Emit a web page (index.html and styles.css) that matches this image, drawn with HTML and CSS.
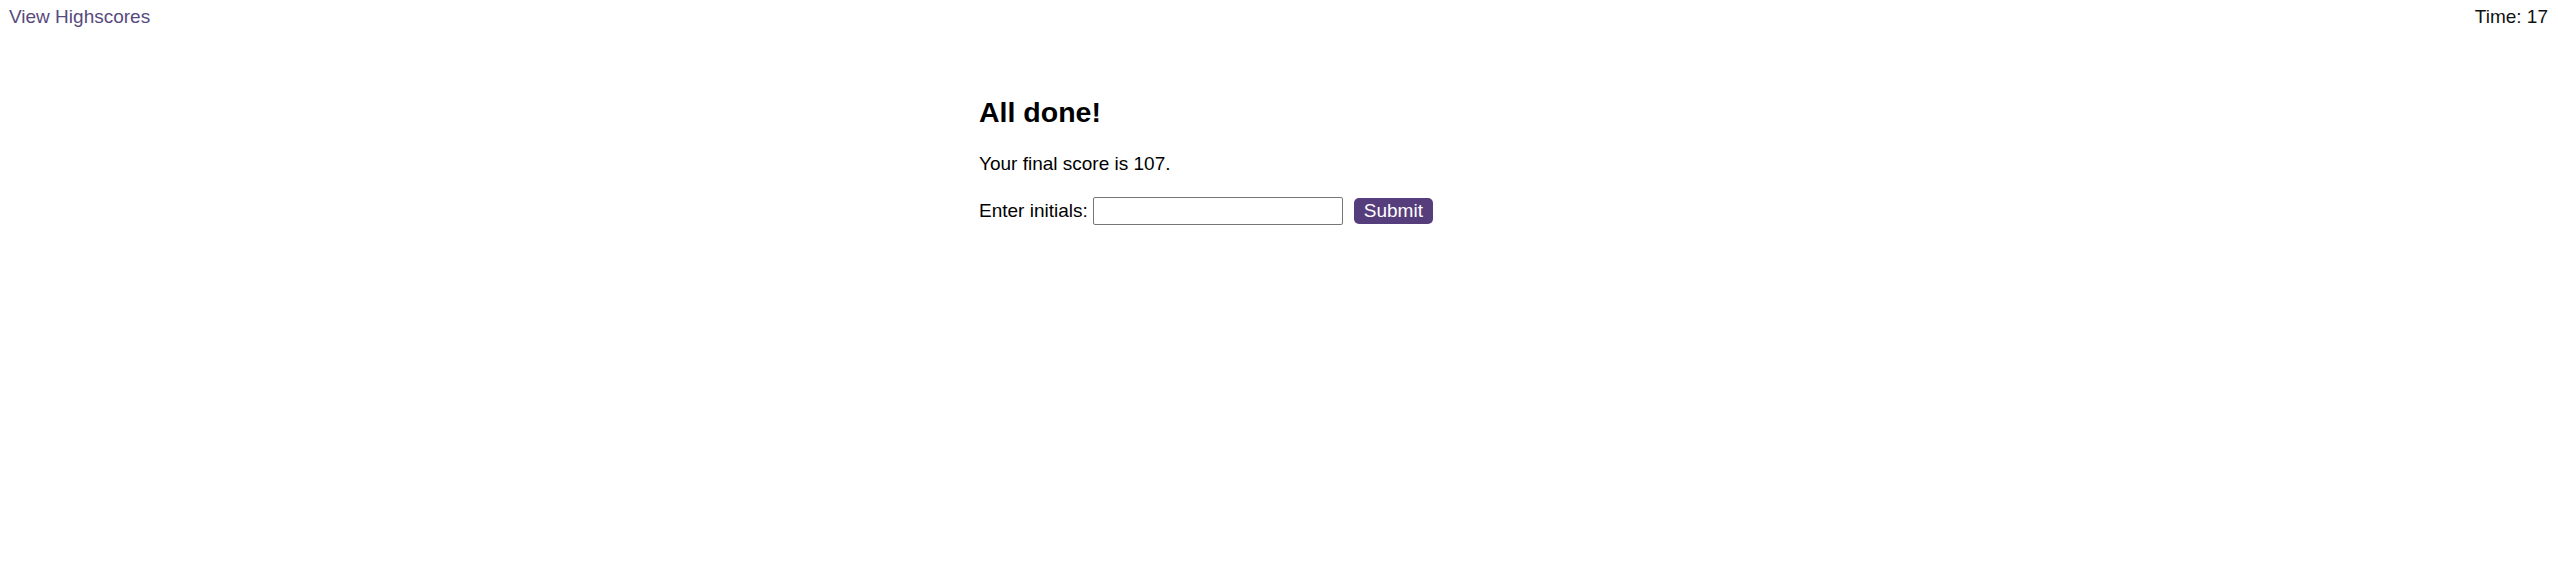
FILE: index.html
```html
<!DOCTYPE html>
<html lang="en">
<head>
<meta charset="utf-8">
<title>Code Quiz</title>
<link rel="stylesheet" href="styles.css">
</head>
<body>
<header class="topbar">
  <a class="highscores-link" href="#">View Highscores</a>
  <div class="timer">Time: 17</div>
</header>
<main class="quiz">
  <h2 class="quiz-title">All done!</h2>
  <p class="quiz-score">Your final score is 107.</p>
  <form class="initials-form">
    <label class="initials-label" for="initials">Enter initials:</label>
    <input class="initials-input" id="initials" type="text">
    <button class="submit-btn" type="button">Submit</button>
  </form>
</main>
</body>
</html>
```

FILE: styles.css
```css
* {
  box-sizing: border-box;
}

body {
  margin: 0;
  font-family: "Liberation Sans", Arial, sans-serif;
  font-size: 19px;
  color: #000;
  background: #fff;
}

.topbar {
  display: flex;
  justify-content: space-between;
  align-items: flex-start;
  height: 27px;
  padding: 6px 10px 0 9px;
  line-height: 21.85px;
}

.highscores-link {
  color: #574a7e;
  text-decoration: none;
}

.timer {
  color: #111;
}

.quiz {
  width: 600px;
  margin: 0 auto;
  padding-top: 69px;
}

.quiz-title {
  margin: 0 0 24px;
  font-size: 28.5px;
  line-height: 32.5px;
  font-weight: bold;
}

.quiz-score {
  margin: 0;
  line-height: 21.85px;
}

.initials-form {
  display: flex;
  align-items: center;
  margin-top: 23px;
  height: 28px;
}

.initials-label {
  line-height: 21.85px;
  margin-right: 5px;
}

.initials-input {
  width: 250px;
  height: 28px;
  border: 1px solid #767676;
  border-radius: 2px;
  padding: 1px 3px;
  font-family: inherit;
  font-size: 15.5px;
  margin: 0 11px 0 0;
}

.submit-btn {
  height: 26px;
  padding: 0 10px;
  border: none;
  border-radius: 5px;
  background: #563d7c;
  color: #fff;
  font-family: inherit;
  font-size: 19px;
  line-height: 26px;
  cursor: pointer;
}
```
